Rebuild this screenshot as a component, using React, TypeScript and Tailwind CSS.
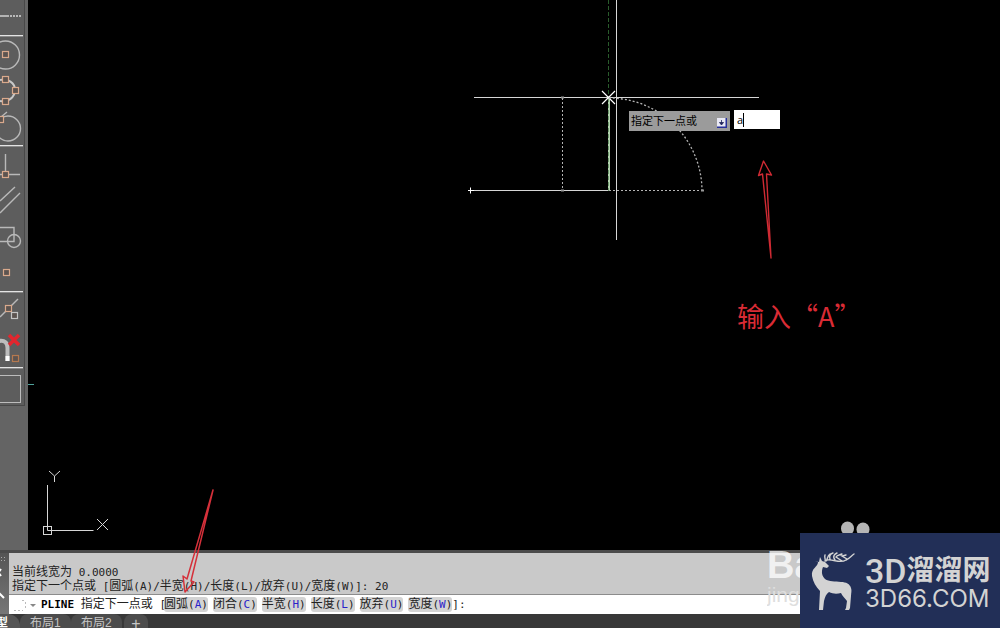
import type { ReactNode } from "react"

const options = [
  { label: "圆弧", hotkey: "A" },
  { label: "闭合", hotkey: "C" },
  { label: "半宽", hotkey: "H" },
  { label: "长度", hotkey: "L" },
  { label: "放弃", hotkey: "U" },
  { label: "宽度", hotkey: "W" },
]

const history = ["当前线宽为 0.0000", "指定下一个点或 [圆弧(A)/半宽(H)/长度(L)/放弃(U)/宽度(W)]: 20"]

// Chinese runs are one size larger than the latin ones
function MixedText({ text }: { text: string }) {
  return (
    <>
      {text.split(/([\u4e00-\u9fff]+)/).map((part, i) =>
        i % 2 ? (
          <span key={i} className="text-[12px]">
            {part}
          </span>
        ) : (
          part
        ),
      )}
    </>
  )
}

function Grip({ x, y, color = "#d9a98c" }: { x: number; y: number; color?: string }) {
  return <rect x={x - 2.5} y={y - 2.5} width="6" height="6" fill="#5c5450" stroke={color} strokeWidth="1.2" />
}

function Tool({ label, children }: { label: string; children: ReactNode }) {
  return (
    <button type="button" aria-label={label} className="block h-9 w-6 shrink-0">
      <svg width="24" height="36" viewBox="0 0 24 36" fill="none" stroke="#b9b9b9" strokeWidth="1.4">
        {children}
      </svg>
    </button>
  )
}

function Divider() {
  return <div className="h-0.5 w-[23px] shrink-0 border-t border-[#e4e4e4] bg-[#8a8a8a]" />
}

function Toolbar() {
  return (
    <aside className="w-7 shrink-0 bg-[#646464]">
      <div className="flex w-[25px] flex-col border-r border-b border-[#484848] bg-[#5d5d5d]">
        <div className="-mt-px">
          <Tool label="延长线">
            <path d="M0 17h9" stroke="#d8d8d8" />
            <path d="M10 17h11" stroke="#d8d8d8" strokeDasharray="2 1" />
          </Tool>
        </div>
        <Divider />
        <Tool label="圆心">
          <circle cx="5.5" cy="18" r="14" />
          <Grip x={5} y={17} />
        </Tool>
        <Tool label="象限点">
          <path d="M0 7c8-2 15 3 15 10s-7 13-15 11" strokeWidth="2" stroke="#c8c8c8" />
          <Grip x={5} y={6} />
          <Grip x={15} y={17} />
          <Grip x={5} y={28} />
        </Tool>
        <Tool label="切点">
          <circle cx="8" cy="19.5" r="12.5" />
          <path d="M1 8l6-5" />
          <Grip x={0} y={10} />
        </Tool>
        <Divider />
        <Tool label="垂足">
          <path d="M5.5 7v21M0 27.500h20" />
          <Grip x={5} y={27} />
        </Tool>
        <Tool label="平行线">
          <path d="M0 18L15 4M0 30L20 10" />
        </Tool>
        <Tool label="插入点">
          <path d="M0 8.500h14v14H0" />
          <circle cx="14" cy="22" r="6.500" />
        </Tool>
        <Tool label="节点">
          <Grip x={6} y={17} />
        </Tool>
        <Divider />
        <Tool label="最近点">
          <path d="M0 24L18 6" />
          <Grip x={8} y={15} />
          <Grip x={14} y={22} color="#c4c4c4" />
        </Tool>
        <Tool label="无捕捉">
          <path d="M-1 12c6-1 8.500 2 8.500 7v13" stroke="#bdbdbd" strokeWidth="4" />
          <path d="M7.500 27v5" stroke="#fff" strokeWidth="4" />
          <path d="M9 6l10 10M19 6L9 16" stroke="#e3262e" strokeWidth="3.500" />
          <Grip x={15} y={29} color="#b5794f" />
        </Tool>
        <div className="h-0.5" />
        <Divider />
        <button
          type="button"
          aria-label="对象捕捉设置"
          className="mt-1.5 mb-0.5 h-7 w-[21px] border border-l-0 border-[#bcbcbc]"
        />
      </div>
    </aside>
  )
}

function Drawing() {
  return (
    <svg
      width="972"
      height="550"
      viewBox="28 0 972 550"
      className="absolute top-0 left-0"
      fill="none"
      stroke="#d6d6d6"
      strokeWidth="1"
    >
      <path d="M28 384.500h6" stroke="#4fa39b" />

      {/* crosshair */}
      <path d="M474 97.500h285M616.500 0v240" />
      <path d="M608.500 0v98" stroke="#2a5c2c" strokeDasharray="4 2" />

      {/* polyline */}
      <path d="M471 190.500h138" />
      <path d="M609 98v93" stroke="#b4d2b0" strokeWidth="2" />
      <path d="M608.500 98v93" stroke="#6f9a6e" strokeDasharray="4 2" />
      <path d="M468 190.500h6M470.500 187.500v6" stroke="#fff" />
      <path d="M602 91l13 13M615 91l-13 13" stroke="#fff" strokeWidth="1.200" />

      {/* pending segments */}
      <g stroke="#b4b4b4" strokeDasharray="2 2">
        <path d="M562.500 98v93" />
        <path d="M609 190.500h94" />
        <path d="M609 98a93 93 0 0 1 93 93" strokeWidth="1.300" />
      </g>
      <path d="M561 97.500h3M561 190.500h3M701 190.500h3" strokeWidth="2" stroke="#999" />

      {/* UCS icon */}
      <path d="M47.500 485v45.500h46" />
      <rect x="43.500" y="526.500" width="8" height="8" />
      <path d="M49 471l5.500 5 5.500-5M54.500 476v6M97 519l11 11M108 519l-11 11" />

      <path
        d="M763.500 161l-5 14.500 4-1.500 8.500 84-4.500-84 5 1z"
        stroke="#cf2a33"
        strokeWidth="1.400"
        strokeLinejoin="round"
      />
    </svg>
  )
}

function DynamicPrompt() {
  return (
    <div className="absolute top-[110px] left-[601px] flex items-start gap-1 font-['Open_Sans','Noto_Sans_CJK_SC',sans-serif] text-[11px] text-black">
      <label
        htmlFor="dynamic-input"
        className="mt-px flex h-5 w-[101px] items-center justify-between bg-[#9b9b9b] pr-[3px] pl-0.5 leading-4"
      >
        指定下一点或
        <svg width="10" height="10" viewBox="0 0 10 10" className="mt-1">
          <rect width="10" height="10" fill="#27309a" />
          <rect width="8.500" height="8.500" fill="#e8e8f4" />
          <path d="M4.500 2v4M2.500 4.500h4L4.500 7z" stroke="#20255c" fill="#20255c" strokeWidth=".8" />
        </svg>
      </label>
      <div className="flex h-[19px] w-[46px] items-center bg-white pl-[3px]">
        <input
          id="dynamic-input"
          defaultValue="a"
          className="w-[6px] bg-transparent p-0 leading-4 outline-none"
        />
        <span className="h-3.5 w-px bg-black" />
      </div>
    </div>
  )
}

function CommandLine() {
  return (
    <section className="flex border-t-[3px] border-[#4b4b4b] font-['DejaVu_Sans_Mono','Noto_Sans_CJK_SC',monospace] text-[11px] text-[#222]">
      <div className="w-[9px] shrink-0 bg-linear-to-b from-[#555] to-[#777]">
        <svg width="9" height="61" viewBox="0 0 9 61" fill="none">
          <path d="M1 4.500h6M1 7.500h6" stroke="#aaa" strokeDasharray="1 2" />
          <path d="M-4 16l5 7M1 16l-5 7M-2 39l6 6" stroke="#fff" strokeWidth="2" />
        </svg>
      </div>
      <div className="min-w-0 flex-1">
        <div className="h-[41px] bg-[#c9c9c9] pt-3 pl-[3px] leading-[14px] whitespace-pre">
          {history.map((line) => (
            <p key={line} className="h-3.5">
              <MixedText text={line} />
            </p>
          ))}
        </div>
        <div className="flex h-5 items-center border-t border-[#8c8c8c] bg-white pl-1 leading-[15px] whitespace-pre">
          <svg width="28" height="16" viewBox="0 0 28 16" fill="none" className="shrink-0">
            <path d="M9 3.500h4M1 13.500h9M12.500 5v6" stroke="#bbb" strokeDasharray="2 2" />
            <path d="M17 7h6l-3 3z" fill="#888" />
          </svg>
          <label htmlFor="command" className="-mr-0.5 shrink-0">
            <b className="text-black">PLINE</b>
            <MixedText text=" 指定下一点或 [" />
          </label>
          <div className="flex shrink-0 gap-[5px]">
            {options.map(({ label, hotkey }) => (
              <button key={hotkey} type="button" className="h-[15px] rounded-[3px] bg-[#d3d3d3]">
                <span className="text-[12px]">{label}</span>(<span className="text-[#2a22c8]">{hotkey}</span>)
              </button>
            ))}
          </div>
          <span>]:</span>
          <input id="command" className="min-w-0 flex-1 bg-transparent outline-none" />
        </div>
      </div>
    </section>
  )
}

function LayoutTabs() {
  return (
    <nav className="flex h-3.5 items-start overflow-hidden bg-[#383838] font-['Liberation_Sans','Noto_Sans_CJK_SC',sans-serif] text-[12px] leading-[19px] text-[#c6c6c6]">
      <button type="button" className="-ml-4 w-9 rounded-tr-xl bg-[#555] text-left font-bold text-white">
        模型
      </button>
      <button type="button" className="w-[51px] rounded-t-lg bg-[#4c4c4c] pl-2.5 text-left">
        布局1
      </button>
      <button type="button" className="w-[51px] rounded-t-lg bg-[#4c4c4c] pl-2.5 text-left">
        布局2
      </button>
      <button type="button" className="ml-0.5 w-6 rounded-t-lg bg-[#4c4c4c] text-[16px]">
        +
      </button>
    </nav>
  )
}

function SiteBadge() {
  return (
    <div className="absolute right-0 bottom-0 flex h-[95px] w-[200px] bg-[#222f57] text-[#d3d3d3]">
      <svg width="65" height="95" viewBox="0 0 65 95" className="shrink-0">
        <path
          fill="#d3d3d3"
          d="M15 28l4 1 1-5 2 4 3 1 4 4-2 2-4-1c-2 5-1 9 2 12 4 3 10 2 16 3 5 0 9 2 10 6 1 3 0 5 0 8l-1 12-1 2h-4l1-2 1-7c-2-3-5-5-6-8-4 1-8 1-12-1-3 2-4 5-5 9l-1 9h-4l1-19c-4-4-7-9-8-15-1-8 6-9 6-14z"
        />
        <path
          fill="none"
          stroke="#d3d3d3"
          strokeWidth="1.400"
          strokeLinecap="round"
          d="M25 28c1-2-1-3 0-6M26 28c2-2 1-5 4-7M27 27c7-1 13 4 19 0 4-2 5-4 8-6M30 26c-1-3 0-5 3-6M35 27c-3-4 0-6 2-7M42 28l-6-4c1-2 4-2 6-3M47 26l-5-3 4-1"
        />
      </svg>
      <div className="pt-[22px] whitespace-nowrap">
        <p className="flex h-8 items-center font-['Roboto','Noto_Sans_CJK_SC',sans-serif] leading-8">
          <span className="text-[34px] font-medium">3D</span>
          <span className="text-[28px] font-bold">溜溜网</span>
        </p>
        <p className="font-['Inter',sans-serif] text-[24px] leading-6">3D66.COM</p>
      </div>
    </div>
  )
}

export default function App() {
  return (
    <div className="relative flex h-screen flex-col overflow-hidden bg-black">
      <main className="flex min-h-0 flex-1">
        <Toolbar />
        <div className="relative min-w-0 flex-1 overflow-hidden bg-black">
          <Drawing />
          <DynamicPrompt />
          <p className="absolute top-[296px] left-[709px] font-['Noto_Sans_CJK_SC',sans-serif] text-[27px] leading-10 whitespace-nowrap text-[#d92b35]">
            输入“A”
          </p>
        </div>
      </main>
      <CommandLine />
      <LayoutTabs />

      {/* arrow pointing at the arc option */}
      <svg width="40" height="112" viewBox="0 0 40 112" className="pointer-events-none absolute bottom-[30px] left-[180px]">
        <path
          d="M33 4L7 93l-4-3 2 16 9-10-3-1z"
          fill="none"
          stroke="#d5303a"
          strokeWidth="1.500"
          strokeLinejoin="round"
        />
      </svg>

      <div className="pointer-events-none absolute right-[200px] bottom-0 h-[81px] w-[33px] overflow-hidden font-['Liberation_Sans',sans-serif]">
        <p className="text-[38px] leading-9 font-bold text-white/75">Ba</p>
        <p className="text-[21px] leading-6 text-[#dedede]">jing</p>
      </div>
      <svg
        width="30"
        height="16"
        viewBox="0 0 30 16"
        className="pointer-events-none absolute right-[130px] bottom-[91px]"
        fill="#b5b5b5"
      >
        <ellipse cx="17.500" cy="7.500" rx="6.500" ry="7" transform="translate(-10 0)" />
        <ellipse cx="23" cy="8.500" rx="6.500" ry="7" />
      </svg>
      <SiteBadge />
    </div>
  )
}
